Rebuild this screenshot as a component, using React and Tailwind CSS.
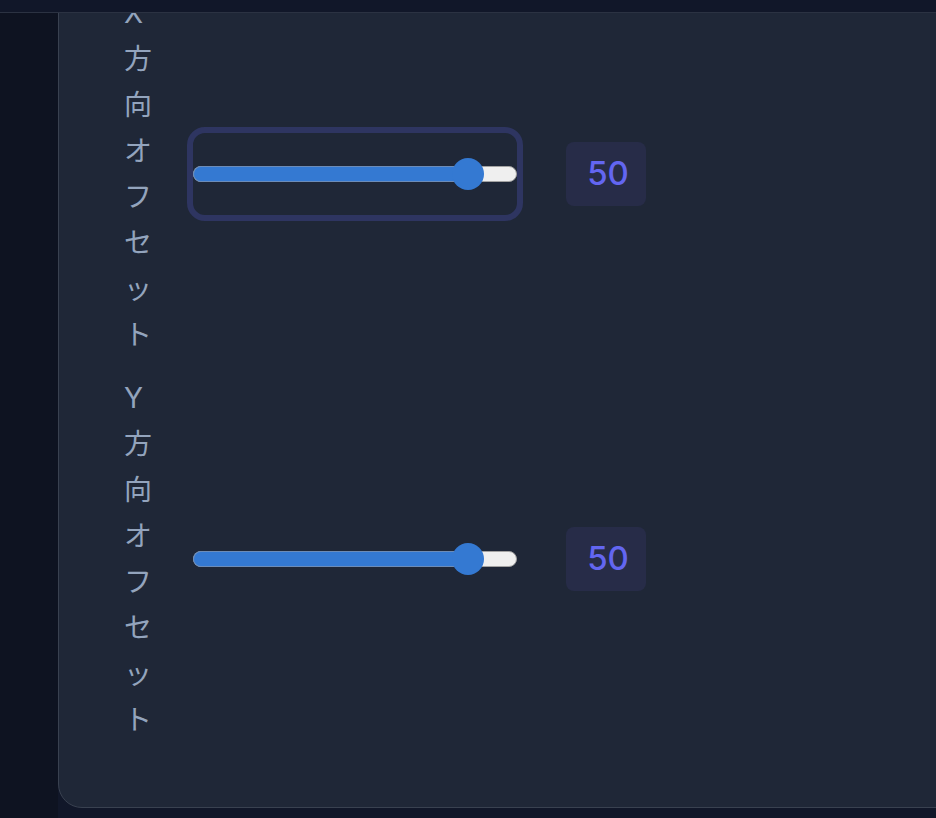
import React from 'react'

const rows = [
  { label: 'X方向オフセット', value: 50, focused: true },
  { label: 'Y方向オフセット', value: 50, focused: false },
]

function VerticalLabel({ text }) {
  return (
    <div className="w-[28px] shrink-0 text-[28px] leading-[46px] text-[#93a4bd]">
      {Array.from(text).map((ch, i) => (
        <div key={i}>{ch}</div>
      ))}
    </div>
  )
}

function OffsetSlider({ focused }) {
  return (
    <div
      className={`w-[336px] h-[94px] shrink-0 rounded-[18px] border-[6px] flex items-center ${
        focused ? 'border-[#2e3561]' : 'border-transparent'
      }`}
    >
      <div className="relative w-full h-[16px]">
        <div className="absolute inset-0 rounded-full bg-[#efefef] border border-[#a2a2a2]" />
        <div className="absolute left-0 top-0 h-full w-[276px] rounded-l-full bg-[#3479d2] border border-r-0 border-[#6c8cb8]" />
        <div className="absolute left-[259px] top-1/2 -translate-y-1/2 w-[32px] h-[32px] rounded-full bg-[#3479d2]" />
      </div>
    </div>
  )
}

export default function App() {
  return (
    <div
      className="min-h-[818px] bg-[#111729] flex overflow-hidden"
      style={{ fontFamily: 'Inter, "Noto Sans CJK JP", sans-serif' }}
    >
      <div className="fixed top-0 left-0 right-0 h-[13px] bg-[#111729] border-b border-[#2b3242] z-10" />
      <aside className="w-[58px] shrink-0 bg-[#0e1321]" />
      <main className="flex-1 min-w-0">
        <div className="-mt-[43px] mb-[10px] -mr-[40px] bg-[#1f2737] border border-[#394150] rounded-3xl pl-[65px] pt-[32px] pb-[64px] flex flex-col gap-[17px]">
          {rows.map((row) => (
            <div key={row.label} className="flex items-center">
              <VerticalLabel text={row.label} />
              <div className="ml-[35px]">
                <OffsetSlider focused={row.focused} />
              </div>
              <div className="ml-[43px] w-[80px] h-[64px] pl-[4px] rounded-lg bg-[#272c48] flex items-center justify-center text-[33px] font-medium text-[#6366f1]">
                {row.value}
              </div>
            </div>
          ))}
        </div>
      </main>
    </div>
  )
}
